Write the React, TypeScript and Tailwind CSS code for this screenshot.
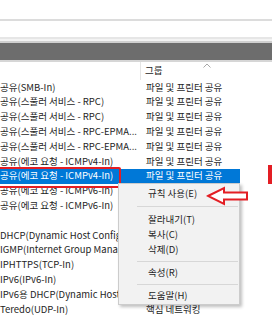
import React from "react";

const rows: { l: string; r: string; sel?: boolean }[] = [
  { l: "공유(SMB-In)", r: "파일 및 프린터 공유" },
  { l: "공유(스풀러 서비스 - RPC)", r: "파일 및 프린터 공유" },
  { l: "공유(스풀러 서비스 - RPC)", r: "파일 및 프린터 공유" },
  { l: "공유(스풀러 서비스 - RPC-EPMA...", r: "파일 및 프린터 공유" },
  { l: "공유(스풀러 서비스 - RPC-EPMA...", r: "파일 및 프린터 공유" },
  { l: "공유(에코 요청 - ICMPv4-In)", r: "파일 및 프린터 공유" },
  { l: "공유(에코 요청 - ICMPv4-In)", r: "파일 및 프린터 공유", sel: true },
  { l: "공유(에코 요청 - ICMPv6-In)", r: "" },
  { l: "공유(에코 요청 - ICMPv6-In)", r: "" },
  { l: "", r: "" },
  { l: "DHCP(Dynamic Host Config", r: "" },
  { l: "IGMP(Internet Group Manage", r: "" },
  { l: "IPHTTPS(TCP-In)", r: "" },
  { l: "IPv6(IPv6-In)", r: "" },
  { l: "IPv6용 DHCP(Dynamic Host", r: "" },
  { l: "Teredo(UDP-In)", r: "핵심 네트워킹" },
];

type MenuEntry = { t: string } | { sep: number };
const menu: MenuEntry[] = [
  { t: "규칙 사용(E)" },
  { sep: 11 },
  { t: "잘라내기(T)" },
  { t: "복사(C)" },
  { t: "삭제(D)" },
  { sep: 8 },
  { t: "속성(R)" },
  { sep: 8 },
  { t: "도움말(H)" },
];

export default function App() {
  return (
    <div
      className="relative w-[272px] h-[320px] overflow-hidden bg-white text-[9.5px] text-[#1e1e1e]"
      style={{ fontFamily: '"Noto Sans CJK KR", "Noto Sans", sans-serif' }}
    >
      <div className="h-[19px]" />
      <div className="h-[2px] bg-[#dcdcdc]" />
      <div className="h-[16px]" />
      <div className="h-[2px] bg-[#e6e6e6]" />
      <div className="h-[2px] bg-[#f3f3f3]" />
      <div className="h-[2px] bg-[#d0d0d0]" />
      <div className="h-[17px] bg-[#6d6d6d]" />
      <div className="h-[2px] bg-[#d6d6d6]" />
      {/* header */}
      <div className="relative flex h-[18px] w-[272px] items-center">
        <div className="w-[141px] h-full border-r border-[#e5e5e5]" />
        <div className="pl-[4px] leading-none">그룹</div>
        <svg className="absolute left-[203px] top-[1px]" width="8" height="5" viewBox="0 0 8 5">
          <path d="M0.5 4.5 L4 1 L7.5 4.5" fill="none" stroke="#a8a8a8" strokeWidth="1" />
        </svg>
      </div>
      {/* rows */}
      <div className="w-[240px]">
        {rows.map((r, i) => (
          <div
            key={i}
            className={`flex h-[14.8px] items-center whitespace-nowrap leading-none ${
              r.sel ? "bg-[#0078d7] text-white" : ""
            }`}
          >
            <div className="w-[141px]">{r.l}</div>
            <div className="pl-[5px]">{r.r}</div>
          </div>
        ))}
      </div>

      {/* red highlight boxes */}
      <div className="absolute left-[-6px] top-[167px] w-[127px] h-[21px] border-2 border-[#e31e24] rounded-[2px]" />
      <div className="absolute left-[268px] top-[165px] w-[20px] h-[19px] border-[4px] border-[#e31e24]" />

      {/* context menu */}
      <div className="absolute left-[118px] top-[183px] w-[122px] border border-[#cccccc] bg-[#f2f2f2] pt-[2px] pb-[1px] shadow-[2px_2px_3px_rgba(0,0,0,0.25)]">
        {menu.map((m, i) =>
          "sep" in m ? (
            <div
              key={i}
              className={`flex items-center pl-[18px] pr-[1px] ${m.sep === 11 ? "h-[11px]" : "h-[8px]"}`}
            >
              <div className="h-px w-full bg-[#d7d7d7]" />
            </div>
          ) : (
            <div key={i} className="flex h-[15px] items-center pl-[29px] leading-none">
              {m.t}
            </div>
          )
        )}
      </div>

      {/* red arrow */}
      <svg className="absolute left-[206px] top-[186px]" width="44" height="21" viewBox="0 0 44 21">
        <path
          d="M2 10 L18 2 L18 6.5 L41 6.5 L41 13.5 L18 13.5 L18 18 Z"
          fill="white"
          stroke="#e31e24"
          strokeWidth="2"
          strokeLinejoin="miter"
        />
      </svg>
    </div>
  );
}
